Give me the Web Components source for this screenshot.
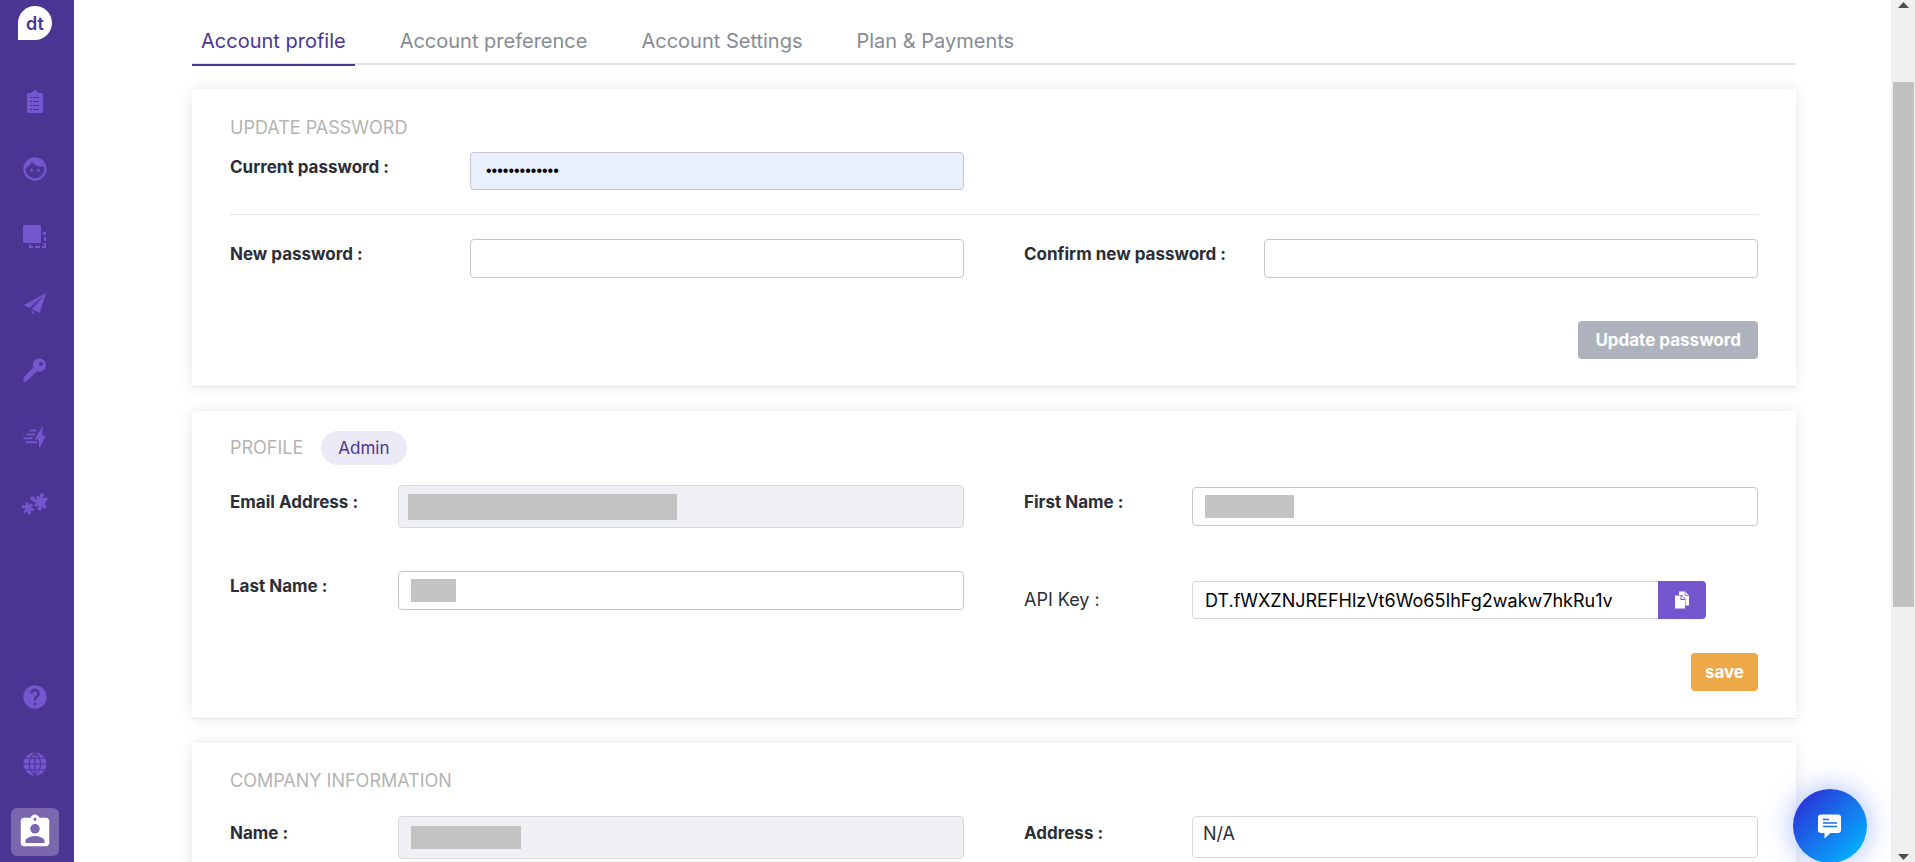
<!DOCTYPE html>
<html lang="en">
<head>
<meta charset="utf-8">
<title>Account profile</title>
<style>
  html, body { margin: 0; height: 100%; overflow: hidden; }
  body {
    font-family: Inter, "Open Sans", sans-serif;
    font-size: 18px;
    line-height: 24px;
    color: #2b2e38;
    background: #fff;
  }
</style>
</head>
<body>
<app-shell>
  <side-bar slot="nav"></side-bar>
  <tab-bar>
    <tab-link active>Account profile</tab-link>
    <tab-link>Account preference</tab-link>
    <tab-link>Account Settings</tab-link>
    <tab-link>Plan &amp; Payments</tab-link>
  </tab-bar>

  <panel-card heading="UPDATE PASSWORD" style="--head-top:22px;--head-gap:7px">
    <field-columns>
      <text-field label="Current password :" type="password" value="correcthorse1" filled wide-label></text-field>
    </field-columns>
    <rule-line></rule-line>
    <field-columns>
      <text-field label="New password :" type="password" wide-label></text-field>
      <text-field slot="right" label="Confirm new password :" type="password" wide-label></text-field>
    </field-columns>
    <action-button slot="action" tone="grey" style="--action-gap:43px">Update password</action-button>
  </panel-card>

  <panel-card heading="PROFILE" style="--head-top:20px;--head-gap:20px">
    <role-badge slot="badge">Admin</role-badge>
    <field-columns>
      <text-field label="Email Address :" locked mask="269" style="--mask-left:10px;--mask-h:26px"></text-field>
      <text-field label="Last Name :" mask="45" style="--gap-top:43px"></text-field>
      <text-field slot="right" label="First Name :" mask="89" style="--gap-top:2px"></text-field>
      <key-field slot="right" label="API Key :" value="DT.fWXZNJREFHlzVt6Wo65IhFg2wakw7hkRu1v"></key-field>
    </field-columns>
    <action-button slot="action" tone="amber" style="--action-gap:34px">save</action-button>
  </panel-card>

  <panel-card heading="COMPANY INFORMATION" style="--head-top:21px;--head-gap:18px">
    <field-columns>
      <text-field label="Name :" locked mask="110"></text-field>
      <text-field slot="right" label="Address :" value="N/A" tall></text-field>
    </field-columns>
  </panel-card>

  <scroll-rail slot="rail"></scroll-rail>
  <chat-launcher slot="float"></chat-launcher>
</app-shell>

<script>
const define = (name, render, after) => customElements.define(name, class extends HTMLElement {
  connectedCallback() {
    if (this.shadowRoot) return;
    this.attachShadow({ mode: 'open' }).innerHTML = render(this);
    if (after) after(this);
  }
});
const attr = (el, name) => el.getAttribute(name) || '';

define('app-shell', () => `
<style>
  :host { display: flex; height: 100vh; overflow: hidden; }
  main { flex: 1; min-width: 0; box-sizing: border-box; padding: 0 95px 0 118px; overflow: hidden;
    display: flex; flex-direction: column; gap: 24px; }
  ::slotted(*) { flex-shrink: 0; }
</style>
<slot name="nav"></slot><main><slot></slot></main><slot name="rail"></slot><slot name="float"></slot>`);

const icons = {
  Tasks: `<path d="M7.500 5H10c.3-1 1.500-1 2-1a2 2 0 0 1 4 0c.5 0 1.700 0 2 1h2.500A1.500 1.500 0 0 1 22 6.500v17a1.500 1.500 0 0 1-1.500 1.500h-13A1.500 1.500 0 0 1 6 23.500V6.500A1.500 1.500 0 0 1 7.500 5z"/><path d="M9 9.500h2m1 0h6M9 13.500h2m1 0h6M9 17.500h2m1 0h6M9 21.500h2m1 0h6" stroke="#4b3592" stroke-width="1"/>`,
  Contacts: `<g transform="scale(1.1667)"><path d="M9 11.750c-.69 0-1.250.56-1.250 1.250s.56 1.250 1.250 1.250 1.250-.56 1.250-1.250-.56-1.250-1.250-1.250zm6 0c-.69 0-1.250.56-1.250 1.250s.56 1.250 1.250 1.250 1.250-.56 1.250-1.250-.56-1.250-1.250-1.250zM12 2C6.480 2 2 6.480 2 12s4.480 10 10 10 10-4.480 10-10S17.520 2 12 2zm0 18c-4.410 0-8-3.590-8-8 0-.29.02-.58.05-.86 2.360-1.050 4.230-2.980 5.210-5.370C11.070 8.330 14.050 10 17.420 10c.78 0 1.530-.09 2.250-.26.21.71.33 1.470.33 2.260 0 4.410-3.590 8-8 8z"/></g>`,
  Templates: `<rect x="2" y="3" width="18" height="18" rx="1"/><path d="M21.500 10H25v3h-2v-1h-1.500zM23 15h2v4h-2zM23 21h2v5h-4v-2h2zM14 24h5v2h-5zM8 22h2v2h2v2H8z"/>`,
  Send: `<path d="M3 16 25.500 3.500 8.500 19zM25.500 3.500 18.500 24l-7.500-4zM10.500 21.500l3.500 1.600-3 2.400z"/>`,
  Keys: `<path fill-rule="evenodd" d="M18.500 2.500a6.500 6.500 0 1 1-2.300 12.600L14 17.500l-1.500.3-.8 2.200-2 .5-.7 2.200-1.700.3-1.800 2.500H2.500v-4l9.800-9.900A6.500 6.500 0 0 1 18.500 2.500zm1.500 3.200a2 2 0 1 0 .01 0z"/>`,
  Automation: `<path d="M21.700 2.500 13.700 16.500h4l.6 9L25 12.500h-3.700zM9 6.600h6.500v2H9zM5.500 10.400h8.500v2H5.500zM2.500 14.200h9v2h-9zM4.500 18.200h11.500v2H4.500z"/>`,
  Integrations: `<g transform="rotate(12 20 12)"><rect x="15.500" y="7.500" width="9" height="9"/><circle cx="19.500" cy="5.300" r="2.100"/><circle cx="20" cy="18.500" r="2.200"/><circle cx="15.600" cy="8" r="1.400"/><circle cx="24.300" cy="8" r="1.800"/><circle cx="24.500" cy="16" r="1.700"/><circle cx="15.700" cy="16.200" r="1.400"/><path d="M16 10.500h-3v3h3z"/></g><circle cx="11.500" cy="8.500" r="2.200"/><path d="M12.500 7.500l2.500 3-1.500 1.500-3-2z"/><g transform="rotate(-12 7 18)"><rect x="4" y="15" width="6.500" height="6.500"/><circle cx="7" cy="13.600" r="1.500"/><circle cx="7.300" cy="23" r="1.800"/><circle cx="2.900" cy="15.800" r="1.700"/><circle cx="3.600" cy="20.800" r="1.400"/><circle cx="11" cy="16" r="1.400"/><circle cx="11.200" cy="20.600" r="1.500"/></g>`,
  Help: `<g transform="scale(1.1667)"><path d="M12 2C6.480 2 2 6.480 2 12s4.480 10 10 10 10-4.480 10-10S17.520 2 12 2zm1 17h-2v-2h2v2zm2.070-7.750l-.9.92C13.450 12.900 13 13.500 13 15h-2v-.5c0-1.100.45-2.100 1.170-2.830l1.240-1.260c.37-.36.59-.86.59-1.410 0-1.100-.9-2-2-2s-2 .9-2 2H8c0-2.210 1.790-4 4-4s4 1.790 4 4c0 .88-.36 1.680-.93 2.250z"/></g>`,
  Language: `<circle cx="14" cy="14" r="11.500"/><path d="M14 2v24M2 14h24M4 8.300h20M4 19.700h20M14 2.500c-7.500 6.500-7.500 16.500 0 23M14 2.500c7.500 6.500 7.500 16.500 0 23" fill="none" stroke="#4b3592" stroke-width="1.100"/>`
};
const navLink = name => `<a href="#" aria-label="${name}"><svg viewBox="0 0 28 28" width="28" height="28" fill="#7457cf" aria-hidden="true">${icons[name]}</svg></a>`;

define('side-bar', () => `
<style>
  :host { display: flex; flex-direction: column; flex: none; box-sizing: border-box; width: 74px; padding-right: 4px; background: #4b3592; }
  .brand { height: 62px; padding-top: 6px; display: flex; justify-content: center; text-decoration: none; }
  .brand span { width: 34px; height: 34px; border-radius: 17px 17px 17px 0; background: #fff; color: #4b3592;
    font-size: 18px; font-weight: 600; line-height: 36px; text-align: center; }
  nav { display: flex; flex-direction: column; align-items: center; }
  nav a { display: flex; width: 70px; height: 67px; align-items: center; justify-content: center; }
  .low { margin-top: auto; padding-bottom: 6px; }
  .low a.here { width: 48px; height: 48px; margin-top: 11px; border-radius: 6px; background: #7a67ae; }
</style>
<a class="brand" href="#"><span>dt</span></a>
<nav aria-label="Main">${['Tasks','Contacts','Templates','Send','Keys','Automation','Integrations'].map(navLink).join('')}</nav>
<nav class="low" aria-label="Support">${navLink('Help')}${navLink('Language')}
  <a class="here" href="#" aria-label="Account"><svg viewBox="0 0 24 24" width="38" height="38" fill="#fff" aria-hidden="true"><path d="M19 3h-4.180C14.400 1.840 13.300 1 12 1c-1.300 0-2.400.84-2.820 2H5c-1.100 0-2 .9-2 2v14c0 1.100.9 2 2 2h14c1.100 0 2-.9 2-2V5c0-1.100-.9-2-2-2zm-7 0c.55 0 1 .45 1 1s-.45 1-1 1-1-.45-1-1 .45-1 1-1zm0 4c1.660 0 3 1.340 3 3s-1.340 3-3 3-3-1.340-3-3 1.340-3 3-3zm6 12H6v-1.400c0-2 4-3.100 6-3.100s6 1.100 6 3.100V19z"/></svg></a>
</nav>`);

define('tab-bar', () => `
<style>
  :host { display: block; }
  nav { display: flex; gap: 36px; border-bottom: 2px solid #e2e3e6; }
</style>
<nav aria-label="Account sections"><slot></slot></nav>`);

define('tab-link', el => `
<style>
  :host { display: block; margin-bottom: -3px; }
  a { display: block; padding: 29px 9px 11px; border-bottom: 2px solid transparent; font-size: 20px; line-height: 24px;
    color: #868b94; text-decoration: none; white-space: nowrap; }
  :host([active]) a { color: #4b3592; border-color: #4b3592; }
</style>
<a href="#"${el.hasAttribute('active') ? ' aria-current="page"' : ''}><slot></slot></a>`);

define('panel-card', el => `
<style>
  :host { display: block; background: #fff; border-bottom: 1px solid #e6e6e6; box-shadow: 0 0 14px rgba(0,0,0,.1); padding: var(--head-top) 38px 27px; }
  header { display: flex; align-items: center; gap: 18px; height: 34px; margin-bottom: var(--head-gap); }
  h2 { margin: 0; font-size: 18px; font-weight: 400; line-height: 24px; color: #b4b4b4; white-space: nowrap; }
  footer { display: flex; justify-content: flex-end; }
</style>
<header><h2>${attr(el, 'heading')}</h2><slot name="badge"></slot></header>
<slot></slot>
<footer><slot name="action"></slot></footer>`);

define('role-badge', () => `
<style>
  :host { display: block; padding: 0 17px; border-radius: 17px; background: #eae9f5; color: #4b3592; font-size: 17px; line-height: 34px; }
</style><slot></slot>`);

define('rule-line', () => `
<style>
  :host { display: block; padding: 24px 0; }
  hr { margin: 0; border: 0; height: 1px; background: #e2e3e5; }
</style><hr>`);

define('field-columns', () => `
<style>
  :host { display: grid; grid-template-columns: repeat(2, minmax(0, 1fr)); column-gap: 60px; }
</style>
<div><slot></slot></div><div><slot name="right"></slot></div>`);

define('text-field', el => `
<style>
  :host { display: grid; grid-template-columns: 168px minmax(0, 1fr); align-items: start; padding-top: var(--gap-top, 0px); }
  :host([wide-label]) { grid-template-columns: 240px minmax(0, 1fr); }
  label { padding-top: 3px; font-size: 17px; font-weight: 700; line-height: 24px; white-space: nowrap; }
  :host([locked]) label, :host([tall]) label { padding-top: 5px; }
  .box { display: grid; align-items: center; }
  input, i { grid-area: 1 / 1; }
  input { box-sizing: border-box; width: 100%; height: 39px; margin: 0; padding: 0 15px; border: 1px solid #c4c6cb; border-radius: 4px;
    background: #fff; color: #2b2e38; font: 400 18px Inter, sans-serif; outline: none; }
  input[type=password] { font: 400 16px "Liberation Sans", sans-serif; color: #000; }
  :host([filled]) input { height: 38px; background: #e8effd; }
  :host([locked]) input { height: 43px; background: #eff0f4; border-color: #d6d8dc; }
  :host([tall]) input { height: 42px; padding: 0 10px 8px; border-color: #d6d8dc; }
  i { width: var(--mask-w); height: var(--mask-h, 23px); margin-left: var(--mask-left, 13px); background: #c3c3c3; }
</style>
<label for="f">${attr(el, 'label')}</label>
<div class="box"><input id="f" type="${attr(el, 'type') || 'text'}" value="${attr(el, 'value')}"${el.hasAttribute('locked') ? ' readonly' : ''}>${el.hasAttribute('mask') ? '<i></i>' : ''}</div>`,
el => { if (el.hasAttribute('mask')) el.style.setProperty('--mask-w', attr(el, 'mask') + 'px'); });

define('key-field', el => `
<style>
  :host { display: grid; grid-template-columns: 168px minmax(0, 1fr) 52px; align-items: center; padding-top: 55px; }
  label { font-size: 18px; line-height: 24px; }
  .group { display: flex; height: 38px; }
  input { box-sizing: border-box; flex: 1; min-width: 0; margin: 0; padding: 0 12px; border: 1px solid #d6d8dc; border-right: 0; border-radius: 4px 0 0 4px;
    background: #fff; color: #000; font: 400 18px Inter, sans-serif; outline: none; }
  button { display: flex; align-items: center; justify-content: center; width: 48px; padding: 0; border: 0; border-radius: 0 4px 4px 0; background: #7457cf; }
</style>
<label for="k">${attr(el, 'label')}</label>
<div class="group"><input id="k" value="${attr(el, 'value')}" readonly><button type="button" aria-label="Copy">
<svg width="16" height="18" viewBox="0 0 16 18" fill="#fff" aria-hidden="true"><path d="M5 .5h6l4 4v10h-3.500V7.500L8 4H5z"/><path d="M1 4.500h5.500V9H11v8.500H1z"/><path d="M7.500 4.500 11 8H7.500z"/><path d="M11 1.200V4.500h3.500" fill="none" stroke="#7457cf" stroke-width=".8"/></svg></button></div>`);

define('action-button', () => `
<style>
  :host { display: block; margin-top: var(--action-gap); }
  button { display: block; height: 38px; margin: 0; padding: 0 14px; border: 0; border-radius: 4px; color: #fff;
    font: 700 17px/36px Inter, sans-serif; }
  :host([tone=grey]) button { background: #aeb2bd; padding: 0 17px; }
  :host([tone=amber]) button { background: #eda847; }
</style>
<button type="button"><slot></slot></button>`);

define('scroll-rail', () => `
<style>
  :host { display: flex; flex-direction: column; align-items: center; flex: none; box-sizing: border-box; width: 24px; background: #f0f0f0; }
  svg { flex: none; fill: #505050; }
  .track { flex: 1; width: 21px; display: flex; flex-direction: column; }
  .before { flex: 67; } .thumb { flex: 525; background: #c1c1c1; } .after { flex: 240; }
</style>
<svg width="24" height="15" viewBox="0 0 24 15"><path d="M7 8l5.500-6L18 8z"/></svg>
<div class="track"><div class="before"></div><div class="thumb"></div><div class="after"></div></div>
<svg width="24" height="15" viewBox="0 0 24 15"><path d="M7 7l5.500 6L18 7z"/></svg>`);

define('chat-launcher', () => `
<style>
  :host { position: fixed; right: 48px; bottom: -1px; }
  button { display: flex; align-items: center; justify-content: center; width: 74px; height: 74px; padding: 0; border: 0; border-radius: 50%;
    background: linear-gradient(135deg, #2a32d8 10%, #03b3ff 90%); box-shadow: 0 0 28px rgba(50,100,255,.45); }
</style>
<button type="button" aria-label="Open chat"><svg width="26" height="26" viewBox="0 0 26 26" aria-hidden="true"><path fill="#fff" d="M4 1.500h17a3 3 0 0 1 3 3V17a3 3 0 0 1-3 3h-7.500L7.500 25.500V20H4a3 3 0 0 1-3-3V4.500a3 3 0 0 1 3-3z"/><path d="M6 6.500h6M6 10h14M6 13.500h14" stroke="#176fe8" stroke-width="1.300"/></svg></button>`);
</script>
</body>
</html>
